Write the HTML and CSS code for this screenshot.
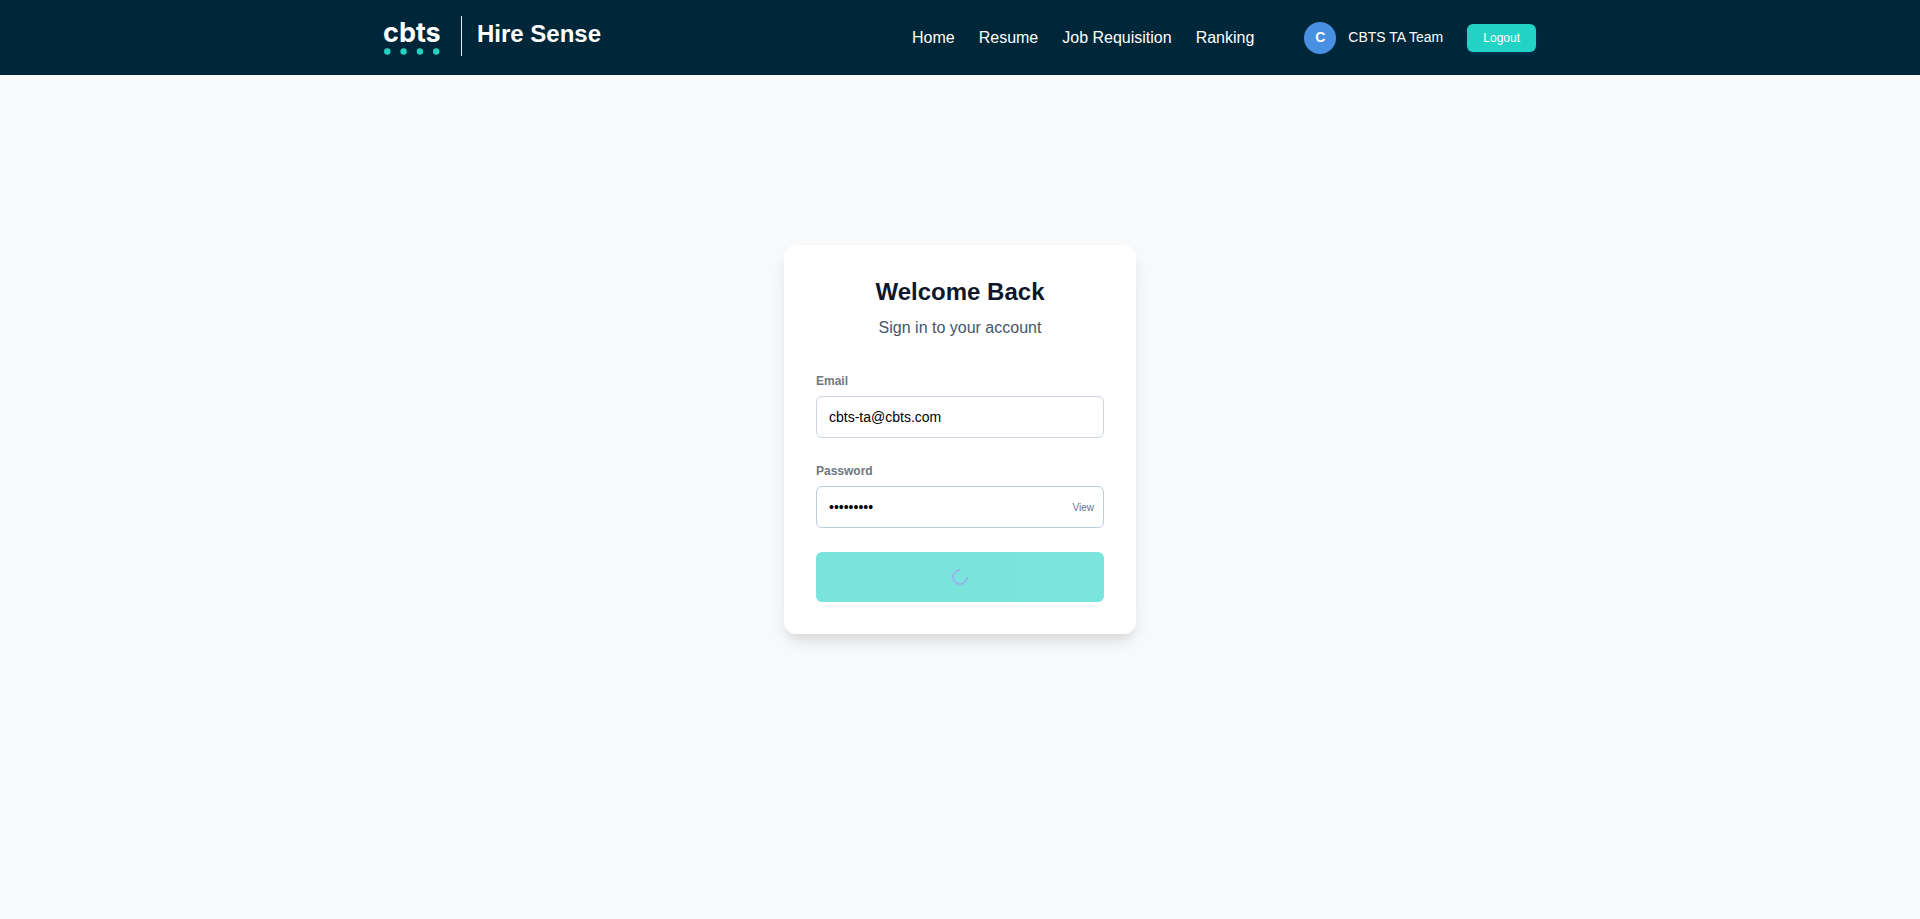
FILE: index.html
```html
<!DOCTYPE html>
<html lang="en">
<head>
  <meta charset="utf-8">
  <meta name="viewport" content="width=device-width, initial-scale=1">
  <title>Hire Sense</title>
  <link rel="stylesheet" href="styles.css">
</head>
<body>
  <header class="header">
    <div class="header-inner">
      <div class="brand">
        <svg class="logo" viewBox="0 0 56 36" role="img" aria-label="cbts">
          <text class="logo-text" x="-1" y="22">cbts</text>
          <g class="logo-dots">
            <circle cx="3.3" cy="31.5" r="3.2"/>
            <circle cx="19.6" cy="31.5" r="3.2"/>
            <circle cx="35.9" cy="31.5" r="3.2"/>
            <circle cx="52.2" cy="31.5" r="3.2"/>
          </g>
        </svg>
        <h1 class="brand-name">Hire Sense</h1>
      </div>
      <nav class="nav">
        <a href="#">Home</a>
        <a href="#">Resume</a>
        <a href="#">Job Requisition</a>
        <a href="#">Ranking</a>
      </nav>
      <div class="user">
        <span class="avatar">C</span>
        <span class="user-name">CBTS TA Team</span>
      </div>
      <button class="logout" type="button">Logout</button>
    </div>
  </header>
  <main class="main">
    <form class="card">
      <h2 class="card-title">Welcome Back</h2>
      <p class="card-subtitle">Sign in to your account</p>
      <div class="field">
        <label for="email">Email</label>
        <input id="email" type="email" value="cbts-ta@cbts.com">
      </div>
      <div class="field">
        <label for="password">Password</label>
        <div class="password">
          <input id="password" type="password" value="password1">
          <button class="view" type="button">View</button>
        </div>
      </div>
      <button class="submit" type="submit" disabled aria-label="Signing in"><span class="spinner"></span></button>
    </form>
  </main>
</body>
</html>
```
FILE: styles.css
```css
* {
  box-sizing: border-box;
}

body {
  margin: 0;
  min-height: 100vh;
  display: flex;
  flex-direction: column;
  background: #f9fafc;
  font-family: "Liberation Sans", Arial, sans-serif;
}

h1, h2, p {
  margin: 0;
}

button, input {
  font-family: inherit;
}

.header {
  background: #002639;
  color: #fff;
}

.header-inner {
  max-width: 1200px;
  margin: 0 auto;
  padding: 16px 24px;
  display: flex;
  align-items: center;
}

.brand {
  display: flex;
  margin: 0 auto 3px 0;
}

.logo {
  width: 56px;
  height: 36px;
  margin: 4px 21px 0 0;
  overflow: visible;
}

.logo-text {
  font: 700 27px Inter, sans-serif;
  fill: #fff;
}

.logo-dots {
  fill: #22d3c5;
}

.brand-name {
  height: 40px;
  padding-left: 15px;
  border-left: 1px solid #e2e8f0;
  font-size: 24px;
  line-height: 36px;
}

.nav {
  display: flex;
  gap: 24px;
  margin-right: 50px;
}

.nav a {
  color: #fff;
  font-size: 16px;
  line-height: 24px;
  text-decoration: none;
}

.user {
  display: flex;
  align-items: flex-start;
  gap: 12px;
  margin-right: 24px;
  font-size: 14px;
  line-height: 30px;
}

.avatar {
  width: 32px;
  height: 32px;
  border-radius: 50%;
  background: #4a90e2;
  font-weight: 700;
  text-align: center;
}

.logout {
  padding: 7px 16px;
  border: 0;
  border-radius: 6px;
  background: #22d3c5;
  box-shadow: 0 2px 4px rgba(0, 82, 155, 0.3);
  color: #fff;
  font-size: 12px;
  line-height: 14px;
}

.main {
  flex: 1;
  display: flex;
  align-items: center;
  justify-content: center;
  padding-bottom: 115px;
}

.card {
  width: 352px;
  padding: 32px;
  border-radius: 12px;
  background: #fff;
  box-shadow: 0 10px 25px rgba(0, 0, 0, 0.06), 0 8px 12px -4px rgba(0, 0, 0, 0.1);
}

.card-title {
  margin-bottom: 9px;
  color: #0f172a;
  font-size: 24px;
  line-height: 30px;
  text-align: center;
}

.card-subtitle {
  margin-bottom: 32px;
  color: #475569;
  font-size: 16px;
  line-height: 24px;
  text-align: center;
}

.field {
  margin-bottom: 24px;
}

.field label {
  display: block;
  margin-bottom: 6px;
  color: #6c7883;
  font-size: 12px;
  font-weight: 700;
  line-height: 18px;
}

.field input {
  display: block;
  width: 100%;
  height: 42px;
  padding: 0 12px;
  border: 1px solid #cbd5e1;
  border-radius: 6px;
  background: #fff;
  color: #000;
  font-size: 14px;
}

.password {
  position: relative;
}

.password input {
  border-color: #b8cbe0;
}

.view {
  position: absolute;
  top: 0;
  right: 0;
  height: 100%;
  padding: 0 10px;
  border: 0;
  background: none;
  color: #64748b;
  font-size: 10px;
}

.submit {
  display: flex;
  align-items: center;
  justify-content: center;
  width: 100%;
  height: 50px;
  padding: 0;
  border: 0;
  border-radius: 6px;
  background: #22d3c5;
  opacity: 0.6;
}

.spinner {
  width: 16px;
  height: 16px;
  border: 2px solid #4f86e0;
  border-top-color: transparent;
  border-radius: 50%;
  transform: rotate(45deg);
}
```
